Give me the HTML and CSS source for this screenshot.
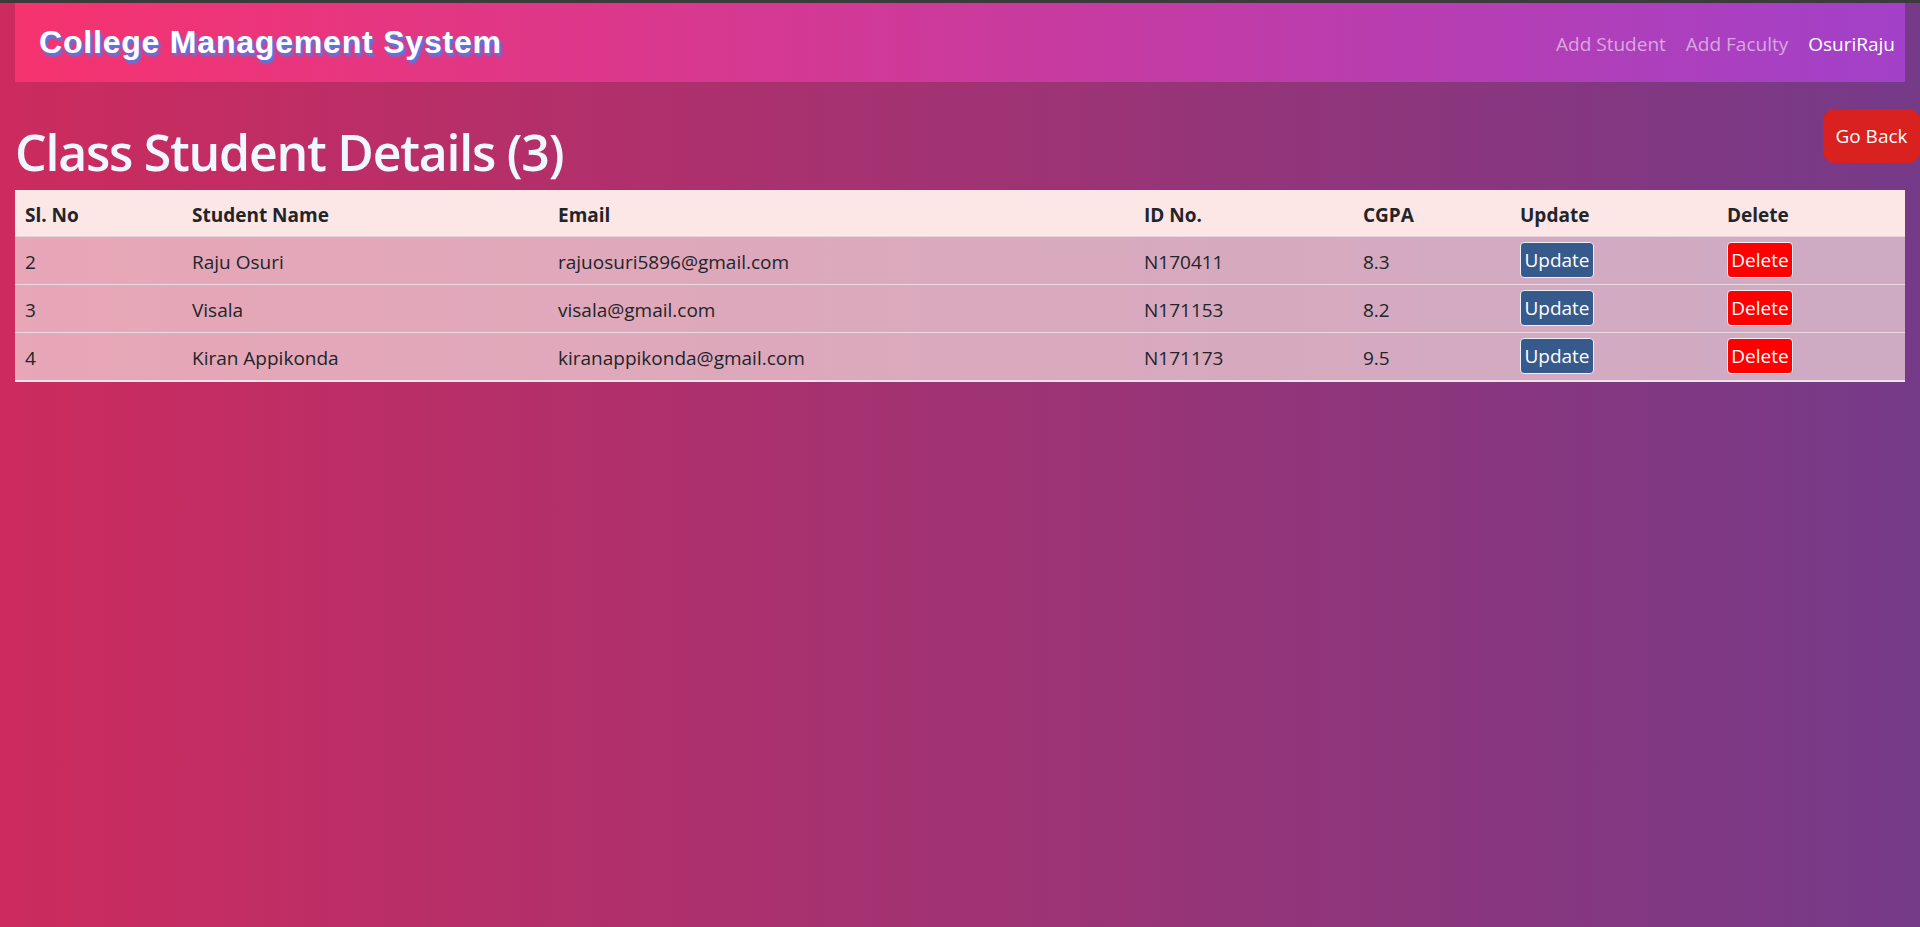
FILE: index.html
```html
<!DOCTYPE html>
<html lang="en">
<head>
<meta charset="utf-8">
<title>College Management System</title>
<link rel="stylesheet" href="styles.css">
</head>
<body>
<div class="topline"></div>
<div class="page">
  <nav class="navbar">
    <a class="brand" href="#">College Management System</a>
    <ul class="nav-links">
      <li><a class="nav-link" href="#">Add Student</a></li>
      <li><a class="nav-link" href="#">Add Faculty</a></li>
      <li><a class="nav-link active" href="#">OsuriRaju</a></li>
    </ul>
  </nav>
  <div class="header-row">
    <h1 class="title">Class Student Details (3)</h1>
    <button class="btn-back">Go Back</button>
  </div>
  <table class="students">
    <colgroup>
      <col class="c1"><col class="c2"><col class="c3"><col class="c4"><col class="c5"><col class="c6"><col class="c7">
    </colgroup>
    <thead>
      <tr><th>Sl. No</th><th>Student Name</th><th>Email</th><th>ID No.</th><th>CGPA</th><th>Update</th><th>Delete</th></tr>
    </thead>
    <tbody>
      <tr><td>2</td><td>Raju Osuri</td><td>rajuosuri5896@gmail.com</td><td>N170411</td><td>8.3</td><td><button class="btn-update">Update</button></td><td><button class="btn-delete">Delete</button></td></tr>
      <tr><td>3</td><td>Visala</td><td>visala@gmail.com</td><td>N171153</td><td>8.2</td><td><button class="btn-update">Update</button></td><td><button class="btn-delete">Delete</button></td></tr>
      <tr><td>4</td><td>Kiran Appikonda</td><td>kiranappikonda@gmail.com</td><td>N171173</td><td>9.5</td><td><button class="btn-update">Update</button></td><td><button class="btn-delete">Delete</button></td></tr>
    </tbody>
  </table>
</div>
</body>
</html>
```

FILE: styles.css
```css
html, body {
  margin: 0;
  padding: 0;
}
body {
  min-height: 100vh;
  background: linear-gradient(to right, #cc2b5e, #753a88);
  font-family: "Open Sans", "Noto Sans", sans-serif;
  color: #212529;
  font-size: 19px;
}
.topline {
  height: 3px;
  background: #3b3b3b;
}
.page {
  padding: 0 15px;
}
.navbar {
  display: flex;
  justify-content: space-between;
  align-items: center;
  height: 79px;
  padding-left: 24px;
  background: linear-gradient(to right, #f6336f, #a241c8);
}
.brand {
  font-family: "Liberation Sans", Arial, sans-serif;
  font-weight: 700;
  font-size: 32px;
  letter-spacing: 0.8px;
  color: #ffffff;
  text-decoration: none;
  text-shadow: 2px 3px 3px #2a8cff;
}
.nav-links {
  display: flex;
  list-style: none;
  margin: 0;
  padding: 0;
}
.nav-link {
  display: block;
  padding: 12px 10px 10px;
  line-height: 30px;
  color: rgba(255, 255, 255, 0.55);
  text-decoration: none;
}
.nav-link.active {
  color: #ffffff;
}
.header-row {
  display: flex;
  justify-content: space-between;
  align-items: flex-start;
  margin-top: 27px;
}
.title {
  margin: 13px 0 8px;
  font-size: 50px;
  line-height: 60px;
  font-weight: 600;
  letter-spacing: -1.25px;
  color: #f0f8ff;
}
.btn-back {
  margin-right: -15px;
  width: 97px;
  height: 54px;
  border: none;
  border-radius: 12px;
  background: #d92120;
  color: #ffffff;
  font-family: inherit;
  font-size: 19px;
}
.students {
  width: 100%;
  border-collapse: collapse;
  table-layout: fixed;
}
.c1 { width: 167px; }
.c2 { width: 366px; }
.c3 { width: 586px; }
.c4 { width: 219px; }
.c5 { width: 157px; }
.c6 { width: 207px; }
.c7 { width: 188px; }
.students th {
  background: #fce6e6;
  text-align: left;
  font-weight: 700;
  padding: 10px 10px 6px;
  line-height: 30px;
  border-bottom: 1px solid #e6d5dc;
}
.students td {
  background: rgba(243, 219, 221, 0.7);
  padding: 7px 10px 4px;
  line-height: 36px;
  vertical-align: top;
  border-bottom: 1px solid #eadbe3;
}
.students tbody tr:last-child td {
  border-bottom: 2px solid #ece4ea;
}
.btn-update, .btn-delete {
  display: block;
  height: 36px;
  margin: -2px 0 2px;
  padding: 0;
  border: 1px solid #eef0f6;
  border-radius: 4px;
  color: #ffffff;
  font-family: inherit;
  font-size: 19px;
  line-height: 32px;
  text-align: center;
}
.btn-update {
  width: 74px;
  background: #365a8c;
}
.btn-delete {
  width: 66px;
  background: #ff0000;
}
```
